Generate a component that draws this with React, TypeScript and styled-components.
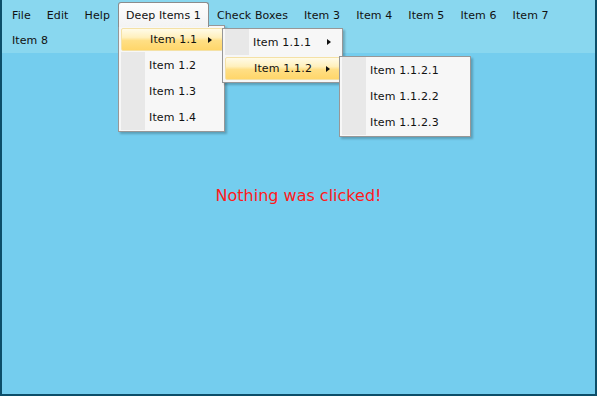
import React from "react";
import styled, { createGlobalStyle, css } from "styled-components";

const Global = createGlobalStyle`
  html, body { margin: 0; padding: 0; background: #74cdee; }
  * { box-sizing: border-box; }
  body { font-family: "DejaVu Sans", Verdana, sans-serif; }
`;

const Window = styled.div`
  width: 597px;
  height: 396px;
  background: #74cdee;
  border-left: 2px solid #0c4e69;
  border-right: 2px solid #0c4e69;
  border-bottom: 2px solid #0c4e69;
  display: flex;
  flex-direction: column;
`;

const MenuBar = styled.div`
  background: #89d7ef;
  height: 53px;
  padding: 2px 0 1px 2px;
  display: flex;
  flex-wrap: wrap;
  align-content: flex-start;
  position: relative;
  z-index: 5;
`;

const TopSlot = styled.div`
  position: relative;
`;

const TopItem = styled.div<{ $open?: boolean }>`
  position: relative;
  height: 25px;
  padding: 1px 7px 0 7px;
  border: 1px solid transparent;
  display: flex;
  align-items: center;
  font-size: 11px;
  letter-spacing: 0.1px;
  color: #111;
  white-space: nowrap;
  ${(p) =>
    p.$open &&
    css`
      z-index: 2;
      border-color: #8c8c8c;
      border-bottom: none;
      border-radius: 3px 3px 0 0;
      background: linear-gradient(#fdfdfd, #f3f3f3);
    `}
`;

const Panel = styled.div<{ $w: number; $left: string; $top: string }>`
  position: absolute;
  z-index: 1;
  left: ${(p) => p.$left};
  top: ${(p) => p.$top};
  width: ${(p) => p.$w}px;
  background: #f7f7f7;
  border: 1px solid #979797;
  box-shadow: 2px 2px 2px rgba(0, 0, 0, 0.22);
  padding: 0 1px 1px 2px;
`;

const Row = styled.div`
  position: relative;
  height: 26px;
  display: flex;
  flex-direction: column;
`;

const Face = styled.div<{ $hot?: boolean }>`
  height: 26px;
  display: grid;
  grid-template-columns: 24px 1fr 14px;
  align-items: center;
  font-size: 11px;
  letter-spacing: 0.15px;
  color: #111;
  white-space: nowrap;
  ${(p) =>
    p.$hot &&
    css`
      height: 23px;
      margin-top: 2px;
      border: 1px solid #f4e1a6;
      border-radius: 2px;
      background: linear-gradient(
        #fffbe8 0%,
        #fff0bd 40%,
        #ffdf85 55%,
        #ffd66a 100%
      );
    `}
`;

const IconCell = styled.div<{ $hot?: boolean }>`
  align-self: stretch;
  background: ${(p) => (p.$hot ? "transparent" : "#e8e8e8")};
`;

const Label = styled.span`
  padding-left: 4px;
`;

const Arrow = styled.span`
  width: 0;
  height: 0;
  border-left: 4px solid #111;
  border-top: 3.5px solid transparent;
  border-bottom: 3.5px solid transparent;
`;

const Content = styled.div`
  flex: 1;
  padding-top: 133px;
  text-align: center;
  font-size: 16px;
  line-height: 20px;
  color: #ff1a1a;
`;

type Item = { label: string; hot?: boolean; sub?: boolean; children?: React.ReactNode };

const MenuRow = ({ label, hot, sub, children }: Item) => (
  <Row>
    <Face $hot={hot}>
      <IconCell $hot={hot} />
      <Label>{label}</Label>
      {sub ? <Arrow /> : <span />}
    </Face>
    {children}
  </Row>
);

const topItems = ["Check Boxes", "Item 3", "Item 4", "Item 5", "Item 6", "Item 7", "Item 8"];

export default function App() {
  return (
    <>
      <Global />
      <Window>
        <MenuBar>
          <TopItem>File</TopItem>
          <TopItem>Edit</TopItem>
          <TopItem>Help</TopItem>
          <TopSlot>
            <TopItem $open>Deep Items 1</TopItem>
            <Panel $w={107} $left="0px" $top="23px">
              <MenuRow label="Item 1.1" hot sub>
                <Panel $w={121} $left="calc(100% - 1px)" $top="2px">
                  <MenuRow label="Item 1.1.1" sub />
                  <MenuRow label="Item 1.1.2" hot sub>
                    <Panel $w={132} $left="calc(100% - 2px)" $top="1px">
                      <MenuRow label="Item 1.1.2.1" />
                      <MenuRow label="Item 1.1.2.2" />
                      <MenuRow label="Item 1.1.2.3" />
                    </Panel>
                  </MenuRow>
                </Panel>
              </MenuRow>
              <MenuRow label="Item 1.2" />
              <MenuRow label="Item 1.3" />
              <MenuRow label="Item 1.4" />
            </Panel>
          </TopSlot>
          {topItems.map((t) => (
            <TopItem key={t}>{t}</TopItem>
          ))}
        </MenuBar>
        <Content>Nothing was clicked!</Content>
      </Window>
    </>
  );
}
